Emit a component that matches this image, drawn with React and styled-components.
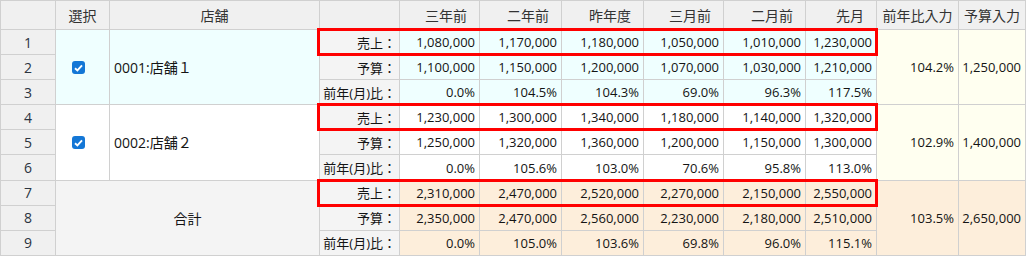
import React from 'react';
import styled, { createGlobalStyle } from 'styled-components';

const GlobalStyle = createGlobalStyle`
  body {
    margin: 0;
    background: #fff;
    font-family: "Open Sans", "Noto Sans CJK JP", sans-serif;
  }
`;

const BORDER = '#d0d0d0';

const tones = {
  head: '#f0f0f0',
  num: '#f0f0f0',
  label: '#f4f4f4',
  azure: '#efffff',
  white: '#ffffff',
  ivory: '#fffff0',
  peach: '#fdeedb',
  gray: '#f4f4f4',
};

const Sheet = styled.div`
  display: grid;
  grid-template-columns: 55px 54px 210px 80px 80px 82px 82px 80px 82px 71px 82px 67px;
  grid-template-rows: 29px repeat(9, 25.1px);
  border-left: 1px solid ${BORDER};
  border-top: 1px solid ${BORDER};
  width: max-content;
`;

const Cell = styled.div`
  grid-row: ${(p) => p.$row};
  grid-column: ${(p) => p.$col};
  display: flex;
  align-items: center;
  justify-content: ${(p) =>
    p.$align === 'left' ? 'flex-start' : p.$align === 'center' ? 'center' : 'flex-end'};
  padding: 0 4px;
  border-right: 1px solid ${BORDER};
  border-bottom: 1px solid ${BORDER};
  background: ${(p) => tones[p.$tone || 'white']};
  font-size: 13px;
  color: #141414;
  white-space: nowrap;
  overflow: hidden;
`;

const HeadCell = styled(Cell)`
  font-size: 14px;
  color: #333;
  padding: ${(p) => (p.$align === 'right' ? '0 12px 0 4px' : '0 2px')};
  background: ${tones.head};
`;

const RowNum = styled(Cell)`
  justify-content: center;
  background: ${tones.num};
  font-size: 14px;
  color: #2b3440;
`;

const Label = styled(Cell)`
  background: ${tones.label};
  padding-right: 3px;
`;

const StoreName = styled(Cell)`
  font-size: 14px;
  padding-left: 4px;
`;

const Check = styled.span`
  width: 13px;
  height: 13px;
  margin-right: 8px;
  margin-top: 1px;
  border-radius: 3px;
  background: #1477d6;
  display: flex;
  align-items: center;
  justify-content: center;
`;

const Highlight = styled.div`
  grid-row: ${(p) => p.$row};
  grid-column: 4 / span 7;
  margin: -2px -1px -1px -3px;
  border: 3px solid #ff0000;
  pointer-events: none;
  z-index: 2;
`;

const months = ['三年前', '二年前', '昨年度', '三月前', '二月前', '先月'];

const blocks = [
  {
    name: '0001:店舗１',
    tone: 'azure',
    sideTone: 'ivory',
    sales: [1080000, 1170000, 1180000, 1050000, 1010000, 1230000],
    budget: [1100000, 1150000, 1200000, 1070000, 1030000, 1210000],
    ratio: ['0.0%', '104.5%', '104.3%', '69.0%', '96.3%', '117.5%'],
    yoy: '104.2%',
    plan: '1,250,000',
  },
  {
    name: '0002:店舗２',
    tone: 'white',
    sideTone: 'ivory',
    sales: [1230000, 1300000, 1340000, 1180000, 1140000, 1320000],
    budget: [1250000, 1320000, 1360000, 1200000, 1150000, 1300000],
    ratio: ['0.0%', '105.6%', '103.0%', '70.6%', '95.8%', '113.0%'],
    yoy: '102.9%',
    plan: '1,400,000',
  },
  {
    total: true,
    tone: 'peach',
    sideTone: 'peach',
    sales: [2310000, 2470000, 2520000, 2270000, 2150000, 2550000],
    budget: [2350000, 2470000, 2560000, 2230000, 2180000, 2510000],
    ratio: ['0.0%', '105.0%', '103.6%', '69.8%', '96.0%', '115.1%'],
    yoy: '103.5%',
    plan: '2,650,000',
  },
];

const fmt = (n) => n.toLocaleString('en-US');

function CheckMark() {
  return (
    <Check>
      <svg width="9" height="8" viewBox="0 0 9 8">
        <polyline points="1,4.2 3.4,6.4 8,1.4" fill="none" stroke="#fff" strokeWidth="1.9" />
      </svg>
    </Check>
  );
}

function Block({ block, index }) {
  const top = 2 + index * 3;
  const lines = [
    { label: '売上：', values: block.sales.map(fmt) },
    { label: '予算：', values: block.budget.map(fmt) },
    { label: '前年(月)比：', values: block.ratio },
  ];

  return (
    <>
      {lines.map((line, i) => (
        <React.Fragment key={line.label}>
          <RowNum $row={top + i} $col={1}>
            {index * 3 + i + 1}
          </RowNum>
          <Label $row={top + i} $col={4}>
            {line.label}
          </Label>
          {line.values.map((v, j) => (
            <Cell key={j} $row={top + i} $col={5 + j} $tone={block.tone}>
              {v}
            </Cell>
          ))}
        </React.Fragment>
      ))}
      {block.total ? (
        <StoreName $row={`${top} / span 3`} $col="2 / span 2" $tone="gray" $align="center">
          合計
        </StoreName>
      ) : (
        <>
          <Cell $row={`${top} / span 3`} $col={2} $tone={block.tone} $align="center">
            <CheckMark />
          </Cell>
          <StoreName $row={`${top} / span 3`} $col={3} $tone={block.tone} $align="left">
            {block.name}
          </StoreName>
        </>
      )}
      <Cell $row={`${top} / span 3`} $col={11} $tone={block.sideTone}>
        {block.yoy}
      </Cell>
      <Cell $row={`${top} / span 3`} $col={12} $tone={block.sideTone}>
        {block.plan}
      </Cell>
      <Highlight $row={top} />
    </>
  );
}

export default function App() {
  return (
    <>
      <GlobalStyle />
      <Sheet>
        <HeadCell $row={1} $col={1} />
        <HeadCell $row={1} $col={2} $align="center">選択</HeadCell>
        <HeadCell $row={1} $col={3} $align="center">店舗</HeadCell>
        <HeadCell $row={1} $col={4} />
        {months.map((m, i) => (
          <HeadCell key={m} $row={1} $col={5 + i} $align="right">
            {m}
          </HeadCell>
        ))}
        <HeadCell $row={1} $col={11} $align="center">前年比入力</HeadCell>
        <HeadCell $row={1} $col={12} $align="center">予算入力</HeadCell>
        {blocks.map((b, i) => (
          <Block key={i} block={b} index={i} />
        ))}
      </Sheet>
    </>
  );
}
